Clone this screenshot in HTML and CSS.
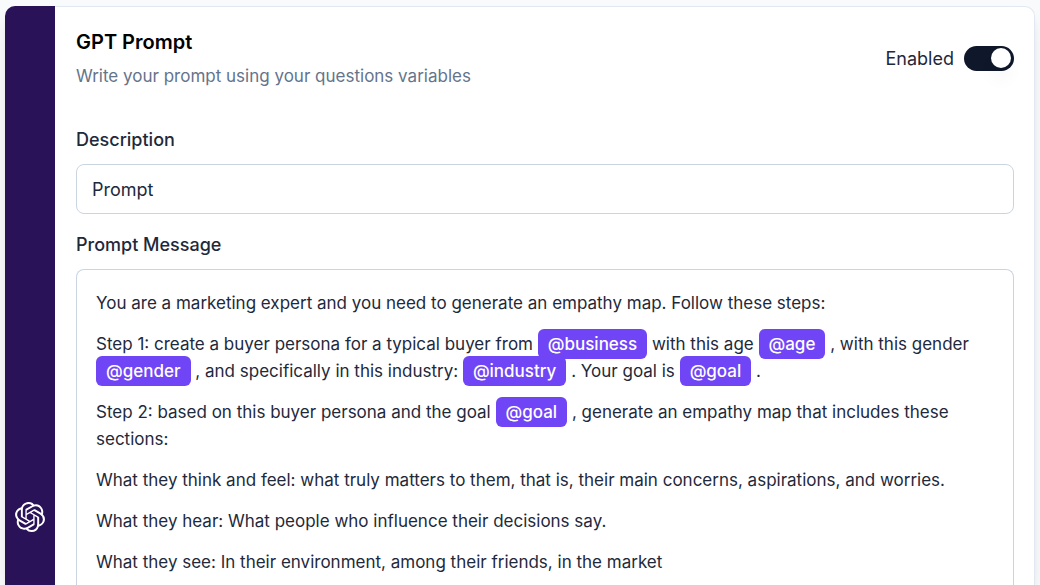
FILE: index.html
```html
<!DOCTYPE html>
<html lang="en">
<head>
<meta charset="utf-8">
<meta name="viewport" content="width=device-width, initial-scale=1">
<title>GPT Prompt</title>
<link rel="stylesheet" href="styles.css">
</head>
<body>
<main class="card">
  <aside class="rail">
    <svg class="rail-icon" viewBox="0 0 24 24" aria-hidden="true"><path d="M22.2819 9.8211a5.9847 5.9847 0 0 0-.5157-4.9108 6.0462 6.0462 0 0 0-6.5098-2.9A6.0651 6.0651 0 0 0 4.9807 4.1818a5.9847 5.9847 0 0 0-3.9977 2.9 6.0462 6.0462 0 0 0 .7427 7.0966 5.98 5.98 0 0 0 .511 4.9107 6.051 6.051 0 0 0 6.5146 2.9001A5.9847 5.9847 0 0 0 13.2599 24a6.0557 6.0557 0 0 0 5.7718-4.2058 5.9894 5.9894 0 0 0 3.9977-2.9001 6.0557 6.0557 0 0 0-.7475-7.0729zm-9.022 12.6081a4.4755 4.4755 0 0 1-2.8764-1.0408l.1419-.0804 4.7783-2.7582a.7948.7948 0 0 0 .3927-.6813v-6.7369l2.02 1.1686a.071.071 0 0 1 .038.052v5.5826a4.504 4.504 0 0 1-4.4945 4.4944zm-9.6607-4.1254a4.4708 4.4708 0 0 1-.5346-3.0137l.142.0852 4.783 2.7582a.7712.7712 0 0 0 .7806 0l5.8428-3.3685v2.3324a.0804.0804 0 0 1-.0332.0615L9.74 19.9502a4.4992 4.4992 0 0 1-6.1408-1.6464zM2.3408 7.8956a4.485 4.485 0 0 1 2.3655-1.9728V11.6a.7664.7664 0 0 0 .3879.6765l5.8144 3.3543-2.0201 1.1685a.0757.0757 0 0 1-.071 0l-4.8303-2.7865A4.504 4.504 0 0 1 2.3408 7.872zm16.5963 3.8558L13.1038 8.364 15.1192 7.2a.0757.0757 0 0 1 .071 0l4.8303 2.7913a4.4944 4.4944 0 0 1-.6765 8.1042v-5.6772a.79.79 0 0 0-.407-.667zm2.0107-3.0231l-.142-.0852-4.7735-2.7818a.7759.7759 0 0 0-.7854 0L9.409 9.2297V6.8974a.0662.0662 0 0 1 .0284-.0615l4.8303-2.7866a4.4992 4.4992 0 0 1 6.6802 4.66zM8.3065 12.863l-2.02-1.1638a.0804.0804 0 0 1-.038-.0567V6.0742a4.4992 4.4992 0 0 1 7.3757-3.4537l-.142.0805L8.704 5.459a.7948.7948 0 0 0-.3927.6813zm1.0976-2.3654l2.602-1.4998 2.6069 1.4998v2.9994l-2.5974 1.4997-2.6067-1.4997Z"/></svg>
  </aside>
  <section class="content">
    <header class="header">
      <div>
        <h1 class="title">GPT Prompt</h1>
        <p class="subtitle">Write your prompt using your questions variables</p>
      </div>
      <label class="toggle">Enabled <input class="switch" type="checkbox" role="switch" checked></label>
    </header>
    <label class="label" for="description">Description</label>
    <input class="field" id="description" type="text" value="Prompt">
    <div class="label" id="message-label">Prompt Message</div>
    <div class="message" role="textbox" aria-multiline="true" aria-labelledby="message-label" contenteditable="true" spellcheck="false">
      <p>You are a marketing expert and you need to generate an empathy map. Follow these steps:</p>
      <p>Step 1: create a buyer persona for a typical buyer from <span class="mention">@business</span> with this age <span class="mention">@age</span> , with this gender <span class="mention">@gender</span> , and specifically in this industry: <span class="mention">@industry</span> . Your goal is <span class="mention">@goal</span> .</p>
      <p>Step 2: based on this buyer persona and the goal <span class="mention">@goal</span> , generate an empathy map that includes these sections:</p>
      <p>What they think and feel: what truly matters to them, that is, their main concerns, aspirations, and worries.</p>
      <p>What they hear: What people who influence their decisions say.</p>
      <p>What they see: In their environment, among their friends, in the market</p>
    </div>
  </section>
</main>
</body>
</html>
```
FILE: styles.css
```css
* { box-sizing: border-box; }

body {
  display: flex;
  height: 100vh;
  margin: 0;
  padding: 6px 5px 0;
  overflow: hidden;
  background: #f8fafc;
  color: #1e293b;
  font: 18px/27px Inter, "Liberation Sans", sans-serif;
}

h1, p { margin: 0; }

.card {
  display: flex;
  flex: 1;
  min-width: 0;
  border: 1px solid #e2e8f0;
  border-width: 1px 1px 0 0;
  border-radius: 10px 10px 0 0;
  background: #fff;
  box-shadow: 0 12px 18px -3px rgb(0 0 0 / 10%), 0 4px 6px -4px rgb(0 0 0 / 10%);
}

.rail {
  display: flex;
  flex: 0 0 50px;
  align-items: flex-end;
  justify-content: center;
  margin-top: -1px;
  padding-bottom: 53px;
  border-radius: 10px 0 0 0;
  background: #2a1258;
}

.rail-icon {
  width: 30px;
  height: 30px;
  fill: #fff;
}

.content {
  display: flex;
  flex: 1;
  flex-direction: column;
  min-width: 0;
  padding: 20px 20px 0 21px;
}

.header {
  display: flex;
  align-items: center;
  justify-content: space-between;
  margin-bottom: 36px;
}

.title {
  margin-bottom: 6px;
  color: #000;
  font-size: 20px;
  font-weight: 600;
  line-height: 30px;
}

.subtitle {
  color: #64748b;
  font-size: 17px;
}

.toggle {
  display: flex;
  align-items: center;
  gap: 10px;
}

.switch {
  display: flex;
  width: 50px;
  height: 25px;
  margin: 0;
  padding: 2px 3px;
  appearance: none;
  border-radius: 13px;
  background: #cbd5e1;
  cursor: pointer;
}

.switch::before {
  width: 20px;
  height: 20px;
  border-radius: 50%;
  background: #fff;
  box-shadow: 0 12px 18px -3px rgb(0 0 0 / 8%);
  content: "";
}

.switch:checked {
  justify-content: flex-end;
  background: #0f172a;
}

.label {
  margin-bottom: 11px;
  font-weight: 500;
}

.field {
  width: 100%;
  height: 50px;
  margin-bottom: 17px;
  padding: 0 15px;
  border: 1px solid #cbd5e1;
  border-radius: 8px;
  background: #fff;
  color: inherit;
  font: inherit;
}

.message {
  display: flex;
  flex: 1;
  flex-direction: column;
  gap: 14px;
  min-height: 0;
  padding: 20px 19px 0;
  overflow: hidden;
  border: 1px solid #cbd5e1;
  border-bottom: 0;
  border-radius: 8px 8px 0 0;
  font-size: 17px;
}

.mention {
  padding: 5px 10px;
  border-radius: 6px;
  background: #7045f5;
  color: #fff;
  font-weight: 500;
}
```
